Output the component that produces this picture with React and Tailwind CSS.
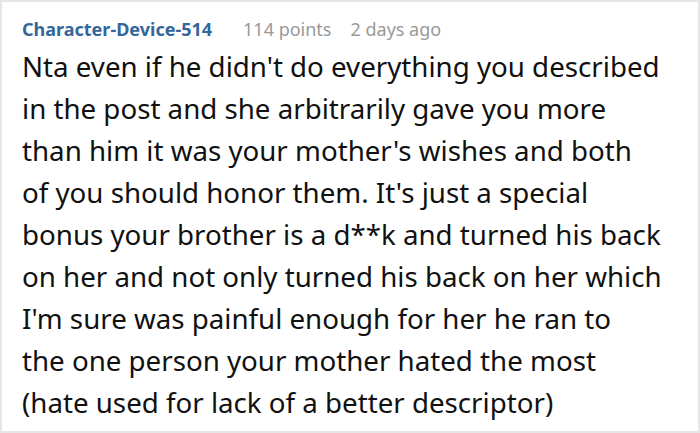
const lines = [
  "Nta even if he didn't do everything you described",
  "in the post and she arbitrarily gave you more",
  "than him it was your mother's wishes and both",
  "of you should honor them. It's just a special",
  "bonus your brother is a d**k and turned his back",
  "on her and not only turned his back on her which",
  "I'm sure was painful enough for her he ran to",
  "the one person your mother hated the most",
  "(hate used for lack of a better descriptor)",
];

export default function App() {
  return (
    <div className="w-[700px] h-[433px] bg-white border-2 border-[#e6e6e6] pl-[20px] pr-[4px] pt-[15px] font-['Noto_Sans',sans-serif]">
      <div className="flex items-baseline text-[18px] leading-[24px]">
        <span className="font-bold text-[#336699]">Character-Device-514</span>
        <span className="ml-[31px] text-[#999999]">114 points</span>
        <span className="ml-[19px] text-[#999999]">2 days ago</span>
      </div>
      <div className="mt-[4px] text-[27.7px] leading-[42px] text-[#111111] whitespace-nowrap">
        {lines.map((line, i) => (
          <div key={i}>{line}</div>
        ))}
      </div>
    </div>
  );
}
